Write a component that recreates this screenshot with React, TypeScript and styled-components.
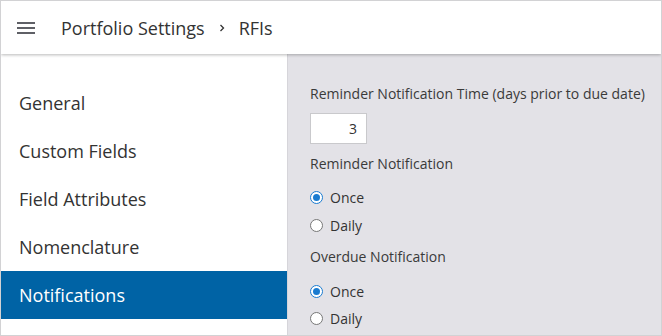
import { FunctionComponent } from 'react'
import styled, { createGlobalStyle } from 'styled-components'

const GlobalStyle = createGlobalStyle`
  html, body {
    margin: 0;
    padding: 0;
    background: #ffffff;
  }
  * {
    box-sizing: border-box;
  }
`

const navItems = ['General', 'Custom Fields', 'Field Attributes', 'Nomenclature', 'Notifications']

interface RadioProps {
  label: string
  checked?: boolean
  top: number
}

const Radio: FunctionComponent<RadioProps> = ({ label, checked, top }) => (
  <RadioRow $top={top}>
    <RadioDot $checked={!!checked} />
    <span>{label}</span>
  </RadioRow>
)

export default function App() {
  return (
    <>
      <GlobalStyle />
      <Frame>
        <Header>
          <Hamburger>
            <span />
            <span />
            <span />
          </Hamburger>
          <Title>
            Portfolio Settings
            <Chevron viewBox="0 0 6 8">
              <path d="M1.5 1 L4.5 4 L1.5 7" fill="none" stroke="#333" strokeWidth="1.3" />
            </Chevron>
            RFIs
          </Title>
        </Header>
        <Body>
          <Sidebar>
            {navItems.map((item) => (
              <NavItem key={item} $active={item === 'Notifications'}>
                {item}
              </NavItem>
            ))}
          </Sidebar>
          <Content>
            <Label>Reminder Notification Time (days prior to due date)</Label>
            <NumberBox>3</NumberBox>
            <Label $top={10}>Reminder Notification</Label>
            <Radio label="Once" checked top={13} />
            <Radio label="Daily" top={8} />
            <Label $top={12}>Overdue Notification</Label>
            <Radio label="Once" checked top={14} />
            <Radio label="Daily" top={7} />
          </Content>
        </Body>
      </Frame>
    </>
  )
}

const Frame = styled.div`
  width: 662px;
  height: 336px;
  border: 1px solid #d2d2d4;
  display: flex;
  flex-direction: column;
  overflow: hidden;
  font-family: 'Open Sans', 'Liberation Sans', sans-serif;
  color: #333333;
`

const Header = styled.div`
  height: 53px;
  flex-shrink: 0;
  display: flex;
  align-items: center;
  background: #ffffff;
  box-shadow: 0 1px 3px rgba(0, 0, 0, 0.28);
  position: relative;
  z-index: 1;
`

const Hamburger = styled.div`
  width: 18px;
  margin-left: 16px;
  margin-top: 1px;
  display: flex;
  flex-direction: column;
  gap: 3px;
  span {
    display: block;
    height: 2px;
    background: #5f6066;
  }
`

const Title = styled.div`
  margin-left: 26px;
  font-size: 18px;
  color: #333333;
  display: flex;
  align-items: center;
`

const Chevron = styled.svg`
  width: 6px;
  height: 8px;
  margin: 0 14px 0 14px;
`

const Body = styled.div`
  flex: 1;
  display: flex;
  min-height: 0;
`

const Sidebar = styled.div`
  width: 287px;
  background: #ffffff;
  padding-top: 25px;
  border-right: 1px solid #d6d5da;
`

const NavItem = styled.div<{ $active: boolean }>`
  height: 48px;
  display: flex;
  align-items: center;
  padding-left: 18px;
  font-size: 18px;
  color: ${(p) => (p.$active ? '#ffffff' : '#333333')};
  background: ${(p) => (p.$active ? '#0063a5' : 'transparent')};
`

const Content = styled.div`
  flex: 1;
  background: #e3e2e7;
  padding: 30px 0 0 22px;
  display: flex;
  flex-direction: column;
  align-items: flex-start;
`

const Label = styled.div<{ $top?: number }>`
  font-size: 14px;
  line-height: 20px;
  color: #3a3a3a;
  margin-top: ${(p) => p.$top ?? 0}px;
`

const NumberBox = styled.div`
  margin-top: 9px;
  width: 57px;
  height: 31px;
  background: #ffffff;
  border: 1px solid #c9c9cc;
  font-size: 14px;
  display: flex;
  align-items: center;
  justify-content: flex-end;
  padding-right: 9px;
  color: #333333;
`

const RadioRow = styled.div<{ $top: number }>`
  margin-top: ${(p) => p.$top}px;
  height: 20px;
  display: flex;
  align-items: center;
  gap: 7px;
  font-size: 14px;
  color: #333333;
`

const RadioDot = styled.span<{ $checked: boolean }>`
  width: 13px;
  height: 13px;
  border-radius: 50%;
  background: #ffffff;
  border: 1px solid ${(p) => (p.$checked ? '#1a7bd0' : '#777777')};
  display: flex;
  align-items: center;
  justify-content: center;
  &::after {
    content: '';
    width: 7px;
    height: 7px;
    border-radius: 50%;
    background: ${(p) => (p.$checked ? '#1a7bd0' : 'transparent')};
  }
`
